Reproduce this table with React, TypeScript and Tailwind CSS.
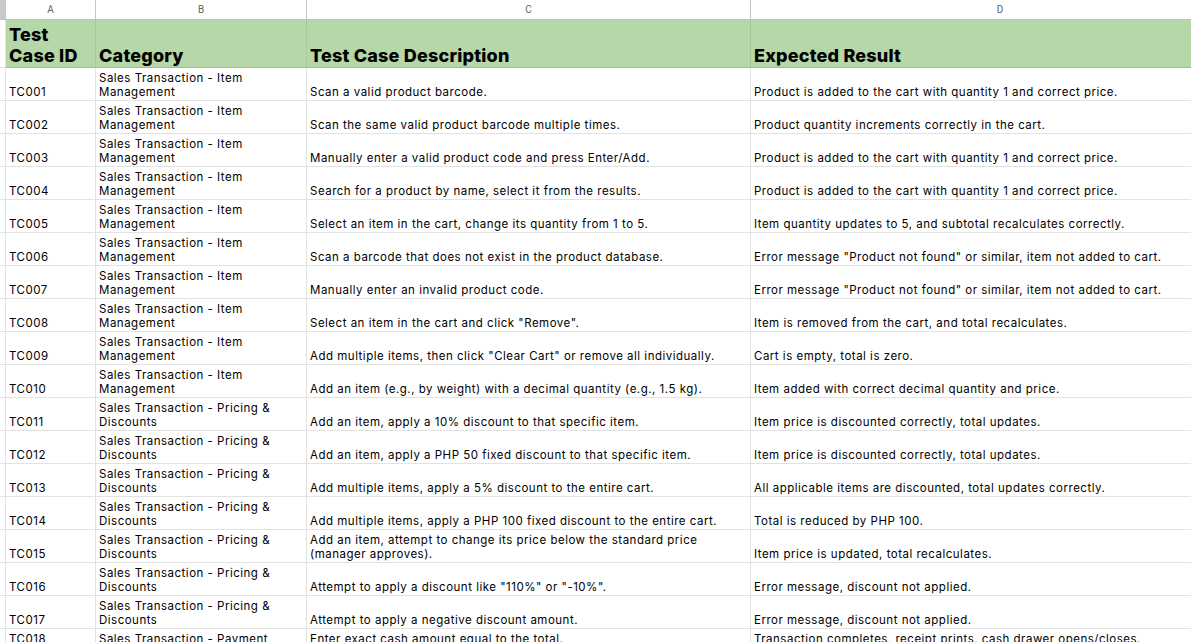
const ITEM = ["Sales Transaction - Item", "Management"];
const PRICING = ["Sales Transaction - Pricing &", "Discounts"];

type Row = { id: string; cat: string[]; desc: string[]; result: string };

const ROWS: Row[] = [
  { id: "TC001", cat: ITEM, desc: ["Scan a valid product barcode."], result: "Product is added to the cart with quantity 1 and correct price." },
  { id: "TC002", cat: ITEM, desc: ["Scan the same valid product barcode multiple times."], result: "Product quantity increments correctly in the cart." },
  { id: "TC003", cat: ITEM, desc: ["Manually enter a valid product code and press Enter/Add."], result: "Product is added to the cart with quantity 1 and correct price." },
  { id: "TC004", cat: ITEM, desc: ["Search for a product by name, select it from the results."], result: "Product is added to the cart with quantity 1 and correct price." },
  { id: "TC005", cat: ITEM, desc: ["Select an item in the cart, change its quantity from 1 to 5."], result: "Item quantity updates to 5, and subtotal recalculates correctly." },
  { id: "TC006", cat: ITEM, desc: ["Scan a barcode that does not exist in the product database."], result: 'Error message "Product not found" or similar, item not added to cart.' },
  { id: "TC007", cat: ITEM, desc: ["Manually enter an invalid product code."], result: 'Error message "Product not found" or similar, item not added to cart.' },
  { id: "TC008", cat: ITEM, desc: ['Select an item in the cart and click "Remove".'], result: "Item is removed from the cart, and total recalculates." },
  { id: "TC009", cat: ITEM, desc: ['Add multiple items, then click "Clear Cart" or remove all individually.'], result: "Cart is empty, total is zero." },
  { id: "TC010", cat: ITEM, desc: ["Add an item (e.g., by weight) with a decimal quantity (e.g., 1.5 kg)."], result: "Item added with correct decimal quantity and price." },
  { id: "TC011", cat: PRICING, desc: ["Add an item, apply a 10% discount to that specific item."], result: "Item price is discounted correctly, total updates." },
  { id: "TC012", cat: PRICING, desc: ["Add an item, apply a PHP 50 fixed discount to that specific item."], result: "Item price is discounted correctly, total updates." },
  { id: "TC013", cat: PRICING, desc: ["Add multiple items, apply a 5% discount to the entire cart."], result: "All applicable items are discounted, total updates correctly." },
  { id: "TC014", cat: PRICING, desc: ["Add multiple items, apply a PHP 100 fixed discount to the entire cart."], result: "Total is reduced by PHP 100." },
  { id: "TC015", cat: PRICING, desc: ["Add an item, attempt to change its price below the standard price", "(manager approves)."], result: "Item price is updated, total recalculates." },
  { id: "TC016", cat: PRICING, desc: ['Attempt to apply a discount like "110%" or "-10%".'], result: "Error message, discount not applied." },
  { id: "TC017", cat: PRICING, desc: ["Attempt to apply a negative discount amount."], result: "Error message, discount not applied." },
  { id: "TC018", cat: ["Sales Transaction - Payment"], desc: ["Enter exact cash amount equal to the total."], result: "Transaction completes, receipt prints, cash drawer opens/closes." },
];

const cell = "border-r border-b border-[#e2e2e2] px-[3px] pb-[1px] pt-[3px] align-bottom whitespace-nowrap overflow-hidden";

function Lines({ lines }: { lines: string[] }) {
  return (
    <>
      {lines.map((l, i) => (
        <div key={i}>{l}</div>
      ))}
    </>
  );
}

export default function App() {
  return (
    <div className="h-[642px] w-[1191px] overflow-hidden bg-white font-['Inter',sans-serif] text-[11.5px] leading-[14px] tracking-[0.5px] text-black">
      <table className="table-fixed border-separate border-spacing-0 w-[1250px]">
        <colgroup>
          <col className="w-[6px]" />
          <col className="w-[90px]" />
          <col className="w-[211px]" />
          <col className="w-[444px]" />
          <col className="w-[499px]" />
        </colgroup>
        <thead>
          <tr className="h-[20px]">
            <th className="border-r border-b border-[#c4c4c4] bg-[#c9c9c9] p-0"></th>
            {["A", "B", "C", "D"].map((c) => (
              <th
                key={c}
                className="border-r border-b border-[#c4c4c4] bg-white p-0 text-center align-middle font-['Roboto',sans-serif] text-[10px] font-normal tracking-normal text-[#5f6368]"
              >
                {c}
              </th>
            ))}
          </tr>
          <tr className="h-[48px]">
            <th className="border-r border-b border-[#e2e2e2] bg-white p-0"></th>
            {[["Test", "Case ID"], ["Category"], ["Test Case Description"], ["Expected Result"]].map((h, i) => (
              <th
                key={i}
                className="border-r border-b border-r-[#a9c99b] border-b-[#9dbd90] bg-[#b6d7a8] px-[3px] pb-[1px] text-left align-bottom text-[18px] font-extrabold leading-[21px] tracking-[0.2px] whitespace-nowrap"
              >
                <Lines lines={h} />
              </th>
            ))}
          </tr>
        </thead>
        <tbody>
          {ROWS.map((r) => (
            <tr key={r.id}>
              <td className="border-r border-b border-[#e2e2e2] p-0"></td>
              <td className={cell}>{r.id}</td>
              <td className={cell}>
                <Lines lines={r.cat} />
              </td>
              <td className={cell}>
                <Lines lines={r.desc} />
              </td>
              <td className={cell}>{r.result}</td>
            </tr>
          ))}
        </tbody>
      </table>
    </div>
  );
}
